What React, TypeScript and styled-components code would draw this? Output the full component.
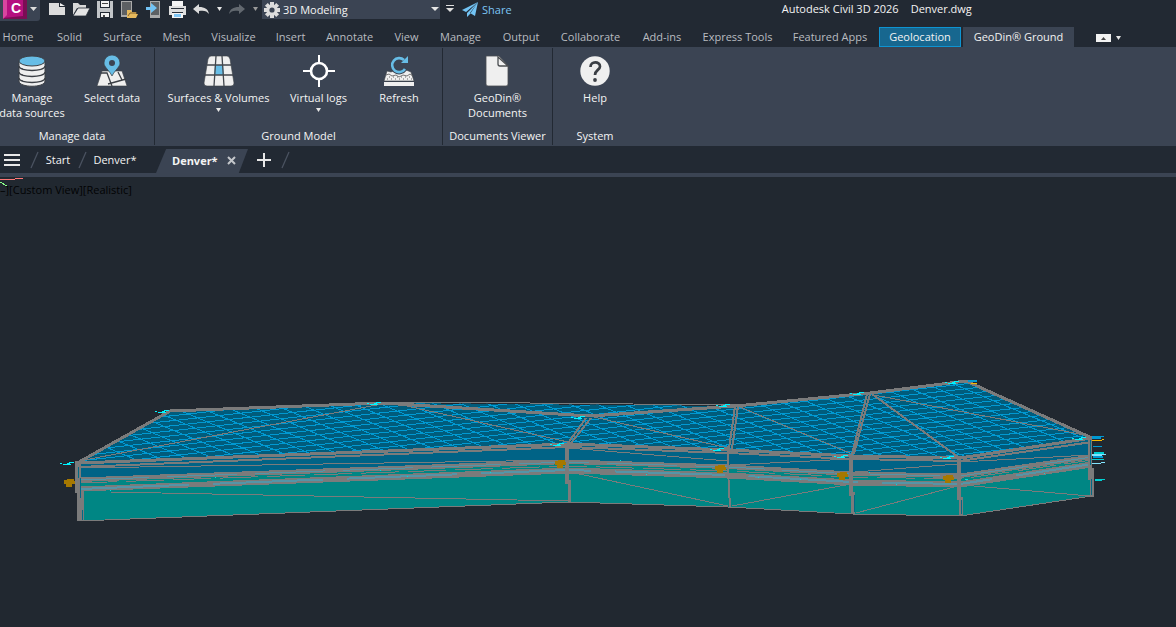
import React from 'react';
import styled, { createGlobalStyle } from 'styled-components';

const Global = createGlobalStyle`
  * { box-sizing: border-box; }
  body { margin: 0; background: #212830; color: #f4f4f4; font-family: "Open Sans", "Noto Sans", sans-serif; font-size: 11px; line-height: 15px; }
  button, select { font: inherit; color: inherit; background: none; border: 0; padding: 0; margin: 0; }
`;

const Page = styled.div`display: flex; flex-direction: column; min-height: 100vh; overflow: hidden;`;
const TitleBar = styled.header`display: flex; align-items: flex-start; height: 27px; background: #222933;`;
const AppButton = styled.button`display: flex; width: 40px; height: 21px; background: #3b4453; border-radius: 0 0 3px 0;`;
const QuickTools = styled.div`display: flex; padding-left: 5px; width: 222px;`;
const ToolButton = styled.button<{ $w?: number }>`
  display: flex; justify-content: center; align-items: center; width: ${p => p.$w ?? 24}px; height: 18px;
`;
const Workspace = styled.div`
  position: relative; display: flex; align-items: center; width: 178px; height: 19px; padding-left: 2px; background: #3b4453;
`;
const WorkspaceSelect = styled.select`appearance: none; flex: 1; height: 18px; padding-left: 3px; outline: 0;`;
const SelectArrow = styled.span`position: absolute; right: 1px; top: 7px; display: flex; pointer-events: none;`;
const Share = styled.button`display: flex; align-items: center; gap: 4px; height: 18px; padding-left: 3px; color: #7cc5f5;`;
const Title = styled.h1`
  display: flex; gap: 12px; flex: 1; justify-content: center; margin: 0; padding-left: 66px;
  font-size: 11px; font-weight: 400; line-height: 18px; white-space: nowrap;
`;

const TabRow = styled.nav`display: flex; height: 20px; margin-left: -10px; background: #222933;`;
const RibbonTab = styled.button<{ $w: number; $kind?: 'context' | 'active' }>`
  flex: none; width: ${p => p.$w}px; height: 20px; line-height: 18px; white-space: nowrap; text-align: center;
  color: ${p => (p.$kind ? '#f2f2f2' : '#b9bcc0')};
  background: ${p => (p.$kind === 'context' ? '#17678f' : p.$kind === 'active' ? '#3b4453' : 'transparent')};
  border: ${p => (p.$kind === 'context' ? '1px solid #0e94d2' : '0')};
  margin-left: ${p => (p.$kind === 'context' ? 1 : p.$kind === 'active' ? 2 : 0)}px;
`;
const RibbonToggle = styled.button`display: flex; align-items: center; gap: 5px; margin-left: 22px; height: 21px;`;

const Ribbon = styled.section`display: flex; height: 99px; margin-left: -10px; padding-top: 1px; background: #3b4453;`;
const Panel = styled.div<{ $w: number; $last?: boolean }>`
  display: flex; flex-direction: column; flex: none; width: ${p => p.$w}px; height: 97px;
  border-right: ${p => (p.$last ? '0' : '1px solid #222933')};
`;
const PanelTools = styled.div<{ $pad?: number }>`display: flex; flex: 1; padding-left: ${p => p.$pad ?? 0}px;`;
const PanelName = styled.div`height: 17px; line-height: 15px; text-align: center; white-space: nowrap;`;
const RibbonButton = styled.button<{ $w: number }>`
  display: flex; flex-direction: column; align-items: center; width: ${p => p.$w}px; padding-top: 7px; line-height: 15px; white-space: nowrap;
  > svg { flex: none; margin-bottom: 3px; }
`;
const Caret = styled.span`display: flex; margin-top: 3px;`;

const DocBar = styled.nav`display: flex; align-items: center; height: 27px; padding-top: 1px; background: #222933;`;
const MenuButton = styled.button`display: flex; width: 28px; padding-left: 4px;`;
const Slash = styled.span`display: flex; width: 12px; justify-content: center;`;
const DocTab = styled.button<{ $w: number }>`width: ${p => p.$w}px; text-align: center; white-space: nowrap; line-height: 26px;`;
const ActiveDoc = styled.div`
  display: flex; align-items: center; align-self: flex-end; gap: 9px; width: 92px; height: 24px; padding: 0 0 1px 16px; margin: 0 9px 0 14px;
  background: #3b4453; clip-path: polygon(11% 0, 100% 0, 90% 100%, 0 100%); font-weight: 700; white-space: nowrap;
`;
const IconButton = styled.button`display: flex;`;
const NewDoc = styled(IconButton)`margin-right: 8px;`;
const Strip = styled.div`height: 4px; background: #3b4453;`;

const Viewport = styled.main`position: relative; flex: 1; background: #212830; > svg { display: block; width: 100%; height: auto; }`;
const ViewLabel = styled.div`position: absolute; left: 0; top: 5px; color: #020304; line-height: 15px; white-space: nowrap;`;

const Down = ({ s = 7, c = '#e6e6e6' }: { s?: number; c?: string }) => (
  <svg width={s} height={4} viewBox="0 0 8 4" preserveAspectRatio="none"><path d="M0 0h8L4 4z" fill={c} /></svg>
);
const SlashMark = () => <Slash><svg width="9" height="18"><path d="M1 17L8 1" stroke="#4b5361" strokeWidth="1.3" /></svg></Slash>;

const icons = {
  create: <svg width="16" height="12"><path d="M0 0h10v4h6v8H0z" fill="#dcdcdc" /><path d="M11 0l5 3h-5z" fill="#f2f2f2" /></svg>,
  open: <svg width="17" height="14"><path d="M0 13V1h5l2 2h6v3H4z" fill="#d8d8d8" /><path d="M5 6h12l-4 8H0z" fill="#e4e4e4" stroke="#222933" strokeWidth=".8" /></svg>,
  save: <svg width="16" height="17"><path d="M0 0h16v17H0z" fill="#c2c5c8" /><path d="M3 0h10v7H3zM3 11h10v6H3z" fill="#222933" /><path d="M4 0h8v6H4zM4 12h8v4H4z" fill="#f2f2f2" /><path d="M5 2h6v1H5zM6 14h2v2H6z" fill="#444" /></svg>,
  openDevice: <svg width="17" height="17"><path d="M0 0h11v16H0z" fill="#aaa" /><path d="M1 1h9v13H1z" fill="#5d6063" /><path d="M6 16V9h4l1 2h4v2h2l-2 4H6z" fill="#e6b85c" /><path d="M7 15l2-3h7" stroke="#80612a" fill="none" /></svg>,
  saveDevice: <svg width="15" height="17"><path d="M4 0h10v17H4z" fill="#aaa" /><path d="M5 1h8v13H5z" fill="#5d6063" /><path d="M0 6h5V2l6 5-6 5V9H0z" fill="#72c3f4" /></svg>,
  print: <svg width="17" height="17"><path d="M3 0h11v5H3z" fill="#f4f4f4" /><path d="M0 5h17v9H0z" fill="#dedede" /><path d="M2 7.500h13M3 11.500h11" stroke="#29303a" /><path d="M3 12h11v5H3z" fill="#f4f4f4" /><path d="M5 13h7v3H5z" fill="#80c6f4" /></svg>,
};

const Undo = ({ c, flip }: { c: string; flip?: boolean }) => (
  <svg width="16" height="11" viewBox="0 0 16 11"><g transform={flip ? 'matrix(-1 0 0 1 16 0)' : undefined}><path d="M0 5l6-5v3c6 0 9 2 10 7-2-3-5-4-10-3v3z" fill={c} /></g></svg>
);

const Gear = () => (
  <svg width="16" height="16" viewBox="-8 -8 16 16">
    {[0, 45, 90, 135].map(a => <rect key={a} x="-2" y="-8" width="4" height="16" fill="#dcdcdc" transform={`rotate(${a})`} />)}
    <circle r="5.5" fill="#dcdcdc" /><circle r="2.6" fill="#3b4453" />
  </svg>
);

const Database = () => (
  <svg width="32" height="32" viewBox="0 0 32 32" stroke="#3b3f45">
    <path d="M3 6v20c0 7 26 7 26 0V6z" fill="#efefef" />
    <path d="M3 11c0 6 26 6 26 0M3 17c0 6 26 6 26 0M3 23c0 6 26 6 26 0" fill="none" strokeWidth="1.4" />
    <ellipse cx="16" cy="6" rx="13" ry="5" fill="#67bde6" />
    <path d="M6 13v1M6 19v1M6 25v1" />
  </svg>
);
const MapPin = () => (
  <svg width="32" height="32" viewBox="0 0 32 32">
    <path d="M6 16h20l5 15H1z" fill="#efefef" stroke="#3b3f45" strokeWidth=".6" />
    <path d="M5 18l6 0 5 13M12 29l18-5M22 17l4 8" fill="none" stroke="#3b3f45" strokeWidth="1.3" />
    <path d="M16 21C13 15 8 12 8 8a8 8 0 0 1 16 0c0 4-5 7-8 13z" fill="#67bde6" stroke="#3b3f45" strokeWidth=".7" />
    <circle cx="16" cy="8" r="3" fill="#3b4453" />
  </svg>
);
const SurfaceGrid = () => (
  <svg width="32" height="32" viewBox="0 0 32 32">
    <path d="M8 1h16q2 0 3 3l4 24q0 3-3 3H4q-3 0-3-3L5 4q1-3 3-3z" fill="#efefef" stroke="#3b3f45" strokeWidth=".6" />
    <path d="M12 10h8l1 10H11z" fill="#67bde6" />
    <path d="M4 10h24M2 20h28M13 1l-2 30M19 1l2 30" stroke="#41464c" strokeWidth="1.3" />
  </svg>
);
const Target = () => (
  <svg width="32" height="32" viewBox="0 0 32 32" fill="none" stroke="#fff" strokeWidth="2">
    <circle cx="16" cy="16" r="8" strokeWidth="2.6" /><path d="M16 0v8M16 24v8M0 16h8M24 16h8" />
  </svg>
);
const RefreshSoil = () => (
  <svg width="32" height="32" viewBox="0 0 32 32">
    <path d="M4 16l4 1 5-2 5 3 5-3 5 2 3 9H1z" fill="#efefef" stroke="#3b3f45" strokeWidth=".6" />
    <path d="M3 20l3-1 3 2 4-1 3 2 4-2 4 1 3-2 3 2" fill="none" stroke="#555" strokeWidth=".8" />
    <path d="M4 24h26M6 22h22" stroke="#666" strokeDasharray="1 3" />
    <path d="M1 27h30v4H1z" fill="#efefef" />
    <path d="M22 14a7 7 0 1 1-1-9" fill="none" stroke="#3b4453" strokeWidth="4.600" />
    <path d="M22 14a7 7 0 1 1-1-9" fill="none" stroke="#67bde6" strokeWidth="2.600" /><path d="M25 1v7h-7z" fill="#67bde6" />
  </svg>
);
const DocumentIcon = () => (
  <svg width="32" height="32" viewBox="0 0 32 32" stroke="#4a4d50" strokeWidth=".8">
    <path d="M4 1h13l9 10v18q0 2-2 2H6q-2 0-2-2z" fill="#efefef" /><path d="M16 2l10 9h-8q-2 0-2-2z" fill="#efefef" strokeWidth="1.3" />
  </svg>
);
const HelpIcon = () => (
  <svg width="32" height="32" viewBox="0 0 32 32">
    <circle cx="16" cy="16" r="14.7" fill="#efefef" />
    <path d="M11.500 12c0-6 9.500-6 9.500-.5 0 3.500-5 3.500-5 8.500" fill="none" stroke="#3b3f45" strokeWidth="2.7" /><circle cx="16" cy="25" r="1.900" fill="#3b3f45" />
  </svg>
);

/* Ground model: stations along the front edge and the depth of each layer there. */
const stationX = [79, 568, 728, 852, 960, 1092];
const layers = {
  roof: [463, 444, 450, 456, 458, 438],
  roofLow: [467, 447, 453, 459, 461, 442],
  clayTop: [479, 461, 466, 473, 475, 456],
  clayMid: [481, 463, 468, 475, 477, 458],
  sand: [483, 466, 471, 477, 479, 460],
  rockTop: [488, 469, 474, 481, 483, 463],
  rockLow: [490, 472, 477, 484, 486, 466],
  base: [521, 502, 507, 514, 516, 496],
};
const run = (ys: number[], d = 0) => stationX.map((x, i) => `${x},${ys[i] + d}`).join(' ');
const band = (a: number[], b: number[]) => `${run(a)} ${stationX.map((x, i) => `${x},${b[i]}`).reverse().join(' ')}`;
const roofShape = '79,462 170,411 382,403 736,406 870,393 966,381 1092,438 960,458 852,455 728,449 568,443';

const Flag = ({ x, y, c = '#00f4ff' }: { x: number; y: number; c?: string }) => (
  <path d={`M${x} ${y}h2M${x + 3} ${y + 1}h8M${x + 7} ${y}h3M${x + 9} ${y - 1}h5`} stroke={c} />
);
const Marker = ({ x, y }: { x: number; y: number }) => (
  <path d={`M${x} ${y}h3v-1h7v2h1v3h-3v3h-6v-3h-2z`} fill="#a67800" />
);

const GroundModel = () => (
  <svg viewBox="0 177 1176 450" role="img" aria-label="Ground model" shapeRendering="crispEdges" fill="none">
    <defs><clipPath id="roof"><polygon points={roofShape} /></clipPath></defs>
    <path d="M0 180L6 179H15L23 178" stroke="#f77" /><path d="M0 182l7 4" stroke="#8f8" />
    <polygon points={roofShape} fill="#005c7c" />
    <g clipPath="url(#roof)" stroke="#0099d2">
      {Array.from({ length: 54 }, (_, i) => <path key={`r${i}`} d={`M60 ${408 + i * 5}L1110 ${293 + i * 5}`} />)}
      {Array.from({ length: 46 }, (_, i) => <path key={`f${i}`} d={`M${-60 + i * 27} 378l240 100`} />)}
    </g>
    <polygon points={band(layers.roof, layers.clayTop)} fill="#006386" />
    <polygon points={band(layers.clayTop, layers.base)} fill="#008684" />
    <g stroke="#7b7b7b">
      <polyline points={run(layers.roof)} strokeWidth="3" />
      <polyline points={run(layers.roofLow)} strokeWidth="2" />
      <polyline points={run(layers.clayTop)} strokeWidth="3" />
      <polyline points={run(layers.clayMid)} strokeWidth="2" />
      <polyline points={run(layers.sand)} strokeWidth="1" strokeDasharray="38 9" />
      <polyline points={run(layers.rockTop)} strokeWidth="3" />
      <polyline points={run(layers.rockLow)} strokeWidth="3" />
      <polyline points={run(layers.base)} />
      <polyline points="79,462 170,411 382,403 590,416 736,406 870,393 966,381 1092,438" strokeWidth="3" />
      <path d="M382 402L530 403L736 405M79 461L382 404M398 404L568 442M594 417L728 448M740 407L850 453M874 395L1090 436" />
      <path d="M872 394L958 457" strokeWidth="2" />
      <path d="M586 418L568 443M591 418L571 443M735 406L729 449M738 406L732 449M867 394L852 454M870 394L854 454" strokeWidth="2" />
      <path d="M110 492L568 501M570 472L728 506M732 506L851 484M856 513L958 486M962 485L1090 496M79 468L568 460M568 448L728 461M730 465L850 459M855 472L958 464M960 462L1090 455" />
    </g>
    <g stroke="#5595a8">
      <polyline points={run(layers.clayMid, -1)} strokeDasharray="70 18" />
      <polyline points={run(layers.rockTop, 1)} strokeWidth="2" strokeDasharray="110 24" />
    </g>
    <g stroke="#7b7b7b" strokeWidth="4">
      <path d="M78 461V493" strokeWidth="6" /><path d="M80 490V521" strokeWidth="7" />
      <path d="M567 443V484" /><path d="M569 480V502" strokeWidth="3" />
      <path d="M728 446V470L730 507" strokeWidth="2" />
      <path d="M851 454V496M853 492V514M959 456V500M961 497V516" />
      <path d="M1090 437V480M1092 468V497" />
    </g>
    <path d="M78 467V478M80 478V498M82 510V520M854 495V512M961 500V514M1090 440V465M1091 479V495" stroke="#006a86" />
    <Flag x={60} y={463} /><Flag x={155} y={411} /><Flag x={367} y={403} /><Flag x={550} y={444} />
    <Flag x={571} y={417} /><Flag x={710} y={449} /><Flag x={716} y={405} /><Flag x={834} y={456} />
    <Flag x={850} y={393} /><Flag x={940} y={457} /><Flag x={945} y={382} /><Flag x={1072} y={438} />
    <Marker x={64} y={480} /><Marker x={555} y={461} /><Marker x={715} y={466} /><Marker x={837} y={473} /><Marker x={943} y={476} />
    <path d="M968 380h9v2h-9zM1092 436h12v1h-3v2h-9zM1093 446h9v1h-9zM1093 456h10v2h-10z" fill="#0099d2" />
    <path d="M971 383h6v1h-6zM1092 440h10v-1h2v1h-2v1h-10z" fill="#f5b800" />
    <path d="M1094 452h10v2h-10zM1092 459h12v1h-12zM1095 479h10v1h-3v1h-7z" fill="#00d0d4" />
    <path d="M1092 454h14v1h-4v1h-10zM1092 463h13v-1h-4v2h-9z" fill="#83e4ff" />
    <path d="M110 490h1M215 477h1M380 470h1M407 476h1M490 472h1M620 460h1M646 474h1M758 477h1M800 479h1M869 472h1M896 484h1M1044 473h1M965 479h3" stroke="#0dd" />
  </svg>
);

const tabs: [string, number][] = [
  ['Home', 56], ['Solid', 47], ['Surface', 59], ['Mesh', 49], ['Visualize', 65], ['Insert', 49], ['Annotate', 69], ['View', 45],
  ['Manage', 63], ['Output', 58], ['Collaborate', 81], ['Add-ins', 62], ['Express Tools', 89], ['Featured Apps', 96],
];

export default function App() {
  return (
    <Page>
      <Global />
      <TitleBar>
        <AppButton aria-label="Application menu">
          <svg width="40" height="21">
            <path d="M3 0h24v19H3z" fill="#7b0d54" /><path d="M3 0h20v16L3 18z" fill="#b5107f" /><path d="M3 0h4v15l-4 4z" fill="#d7469f" />
            <text x="16" y="13" textAnchor="middle" fontFamily="Liberation Sans, sans-serif" fontSize="14" fontWeight="700" fill="#fff">C</text>
            <path d="M30 7h7l-3.500 4z" fill="#ddd" />
          </svg>
        </AppButton>
        <QuickTools>
          <ToolButton aria-label="New">{icons.create}</ToolButton>
          <ToolButton aria-label="Open">{icons.open}</ToolButton>
          <ToolButton aria-label="Save">{icons.save}</ToolButton>
          <ToolButton aria-label="Open from mobile">{icons.openDevice}</ToolButton>
          <ToolButton aria-label="Save to mobile">{icons.saveDevice}</ToolButton>
          <ToolButton aria-label="Plot">{icons.print}</ToolButton>
          <ToolButton aria-label="Undo"><Undo c="#dcdcdc" /></ToolButton>
          <ToolButton aria-label="Undo list" $w={12}><Down s={5} /></ToolButton>
          <ToolButton aria-label="Redo"><Undo c="#62686f" flip /></ToolButton>
          <ToolButton aria-label="Redo list" $w={12}><Down s={5} c="#999" /></ToolButton>
        </QuickTools>
        <Workspace>
          <Gear />
          <WorkspaceSelect aria-label="Workspace" defaultValue="3D Modeling"><option>3D Modeling</option></WorkspaceSelect>
          <SelectArrow><Down s={8} /></SelectArrow>
        </Workspace>
        <ToolButton aria-label="Customize toolbar" $w={19}><svg width="8" height="8"><path d="M0 0h8v1H0zM0 3h8L4 7z" fill="#ddd" /></svg></ToolButton>
        <Share><svg width="16" height="15"><path d="M16 0L0 8l4 2zM16 0L5 11v4l3-3zM16 0l-3 14-5-3z" fill="#72c3f4" /></svg>Share</Share>
        <Title><span>Autodesk Civil 3D 2026</span><span>Denver.dwg</span></Title>
      </TitleBar>

      <TabRow>
        {tabs.map(([name, w]) => <RibbonTab key={name} $w={w}>{name}</RibbonTab>)}
        <RibbonTab $w={82} $kind="context">Geolocation</RibbonTab>
        <RibbonTab $w={111} $kind="active">GeoDin® Ground</RibbonTab>
        <RibbonToggle aria-label="Minimize ribbon">
          <svg width="15" height="8"><path d="M0 0h15v8H0z" fill="#f2f2f2" /><path d="M5 6h5L7.500 3z" fill="#444" /></svg><Down s={5} />
        </RibbonToggle>
      </TabRow>

      <Ribbon>
        <Panel $w={165}>
          <PanelTools>
            <RibbonButton $w={84}><Database />Manage<br />data sources</RibbonButton>
            <RibbonButton $w={76}><MapPin />Select data</RibbonButton>
          </PanelTools>
          <PanelName>Manage data</PanelName>
        </Panel>
        <Panel $w={288}>
          <PanelTools $pad={6}>
            <RibbonButton $w={115}><SurfaceGrid />Surfaces &amp; Volumes<Caret><Down s={5} /></Caret></RibbonButton>
            <RibbonButton $w={85}><Target />Virtual logs<Caret><Down s={5} /></Caret></RibbonButton>
            <RibbonButton $w={76}><RefreshSoil />Refresh</RibbonButton>
          </PanelTools>
          <PanelName>Ground Model</PanelName>
        </Panel>
        <Panel $w={110}>
          <PanelTools><RibbonButton $w={109}><DocumentIcon />GeoDin®<br />Documents</RibbonButton></PanelTools>
          <PanelName>Documents Viewer</PanelName>
        </Panel>
        <Panel $w={84} $last>
          <PanelTools><RibbonButton $w={84}><HelpIcon />Help</RibbonButton></PanelTools>
          <PanelName>System</PanelName>
        </Panel>
      </Ribbon>

      <DocBar>
        <MenuButton aria-label="Drawing tabs menu"><svg width="16" height="12"><path d="M0 0h16v2H0zM0 5h16v2H0zM0 10h16v2H0z" fill="#e8e8e8" /></svg></MenuButton>
        <SlashMark />
        <DocTab $w={36}>Start</DocTab>
        <SlashMark />
        <DocTab $w={54}>Denver*</DocTab>
        <ActiveDoc>Denver*<IconButton aria-label="Close"><svg width="9" height="9"><path d="M1 1l7 7M8 1L1 8" stroke="#c4c7cb" strokeWidth="2" /></svg></IconButton></ActiveDoc>
        <NewDoc aria-label="New drawing"><svg width="14" height="14"><path d="M6 0h2v14H6zM0 6h14v2H0z" fill="#e8e8e8" /></svg></NewDoc>
        <SlashMark />
      </DocBar>
      <Strip />
      <Viewport>
        <GroundModel />
        <ViewLabel>–][Custom View][Realistic]</ViewLabel>
      </Viewport>
    </Page>
  );
}
